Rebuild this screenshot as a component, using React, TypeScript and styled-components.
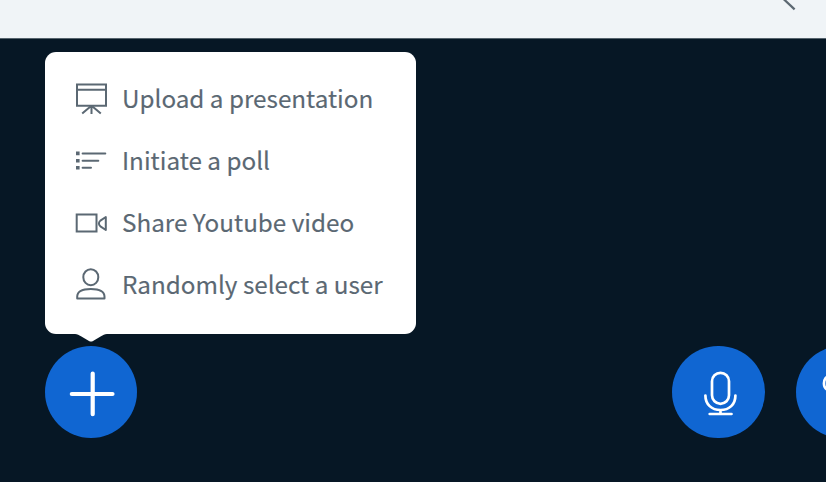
import React from "react";
import styled, { createGlobalStyle } from "styled-components";

const GlobalStyle = createGlobalStyle`
  * { box-sizing: border-box; }
  html, body { margin: 0; padding: 0; overflow: hidden; }
`;

const Page = styled.div`
  display: flex;
  flex-direction: column;
  width: 826px;
  height: 482px;
  overflow: hidden;
  background: #061725;
  font-family: "Noto Sans CJK SC", "Noto Sans", sans-serif;
`;

const Header = styled.header`
  display: flex;
  justify-content: flex-end;
  flex: none;
  height: 39px;
  padding-right: 30px;
  background: #f0f4f7;
  border-bottom: 1px solid #56636d;
`;

const Stage = styled.main`
  flex: 1;
  display: flex;
  flex-direction: column;
  justify-content: flex-end;
  padding: 0 0 44px 45px;
`;

const ActionsBar = styled.footer`
  display: flex;
  align-items: center;
  width: 844px;
  height: 92px;
`;

const MediaControls = styled.div`
  display: flex;
  gap: 31px;
  margin-left: 535px;
`;

const MenuAnchor = styled.div`
  position: relative;
  flex: none;
`;

const RoundButton = styled.button`
  display: flex;
  align-items: center;
  justify-content: center;
  flex: none;
  width: 92.4px;
  height: 92.4px;
  padding: 0;
  border: 0;
  border-radius: 50%;
  background: #1066d2;
  color: #fff;
`;

const Menu = styled.ul`
  position: absolute;
  left: 0;
  bottom: 104px;
  width: 370.5px;
  height: 282px;
  margin: 0;
  padding: 16px 0 0 30px;
  list-style: none;
  border-radius: 11px;
  background: #fff;
`;

const MenuArrow = styled.svg`
  position: absolute;
  left: 30px;
  bottom: -8px;
  display: block;
`;

const MenuItem = styled.li`
  display: flex;
  align-items: center;
  gap: 15px;
  height: 62px;
  color: #5b6873;
`;

const Label = styled.span`
  padding-bottom: 2px;
  font-size: 24.25px;
  line-height: 36px;
  white-space: nowrap;
  -webkit-text-stroke: 0.15px currentColor;
`;

const Icon = styled.svg`
  display: block;
  flex: none;
  fill: none;
  stroke: currentColor;
`;

const PresentationIcon = () => (
  <Icon width="32" height="36" viewBox="0 0 32 36" strokeWidth="2">
    <path d="M2 3.4H31V24.8H2ZM2 8.8H31" />
    <path d="M16.5 25V33M15.5 25.5L7.2 32.6M17.5 25.5L25.8 32.6" />
  </Icon>
);

const PollIcon = () => (
  <Icon width="32" height="36" viewBox="0 0 32 36" strokeWidth="2">
    <path d="M7.6 10.4H30.3M7.6 17.7H23.3M7.6 24.8H16" strokeLinecap="round" />
    <path d="M1 10.4H4.6M1 17.7H4.6M1 24.8H4.6" strokeWidth="3.6" />
  </Icon>
);

const VideoIcon = () => (
  <Icon width="32" height="36" viewBox="0 0 32 36" strokeWidth="2">
    <path d="M1.7 9.5H21.5V26.5H1.7Z" />
    <path d="M30.8 12V25L25.4 21.4Q22.4 18.5 25.4 15.6Z" strokeLinejoin="round" />
  </Icon>
);

const UserIcon = () => (
  <Icon width="32" height="36" viewBox="0 0 32 36" strokeWidth="2">
    <ellipse cx="15.8" cy="10.2" rx="7.5" ry="8" />
    <path d="M2.2 31.4V29.7C2.2 24.7 7 22 15.8 22S29.5 24.7 29.5 29.7V31.4Z" strokeLinejoin="round" />
  </Icon>
);

const items = [
  { label: "Upload a presentation", icon: <PresentationIcon /> },
  { label: "Initiate a poll", icon: <PollIcon /> },
  { label: "Share Youtube video", icon: <VideoIcon /> },
  { label: "Randomly select a user", icon: <UserIcon /> },
];

export default function App() {
  return (
    <>
      <GlobalStyle />
      <Page>
        <Header>
          <Icon width="18" height="12" viewBox="0 0 18 12" color="#5c6872" strokeWidth="2.2">
            <path d="M4.5 -2L16.6 9.4" />
          </Icon>
        </Header>
        <Stage>
          <ActionsBar>
            <MenuAnchor>
              <Menu>
                {items.map((item) => (
                  <MenuItem key={item.label}>
                    {item.icon}
                    <Label>{item.label}</Label>
                  </MenuItem>
                ))}
                <MenuArrow width="32" height="9" viewBox="0 0 32 9">
                  <path d="M0 0V1C2.5 1.2 4 2 6 3.3L14 8Q16 9.2 18 8L26 3.3C28 2 29.5 1.2 32 1V0Z" fill="#fff" stroke="none" />
                </MenuArrow>
              </Menu>
              <RoundButton aria-label="Actions">
                <Icon width="92" height="92" viewBox="0 0 92 92" strokeWidth="4.2" strokeLinecap="round">
                  <path d="M47.7 27.5V68.2M26.8 48H67.5" />
                </Icon>
              </RoundButton>
            </MenuAnchor>
            <MediaControls>
              <RoundButton aria-label="Microphone">
                <Icon width="92" height="92" viewBox="0 0 92 92" strokeWidth="2.7" strokeLinecap="round">
                  <rect x="39" y="26.8" width="17" height="31" rx="8.5" />
                  <path d="M32.4 49.5C32.4 58.5 38.7 64 47.5 64S62.4 58.5 62.4 49.5M47.5 64V68M36.7 68H58.5" />
                </Icon>
              </RoundButton>
              <RoundButton aria-label="Audio">
                <Icon width="92" height="92" viewBox="0 0 92 92" strokeWidth="2.7">
                  <path d="M36 30C29 30 27.8 34 28 38C28.1 41 29.4 43.2 32.5 44" />
                </Icon>
              </RoundButton>
            </MediaControls>
          </ActionsBar>
        </Stage>
      </Page>
    </>
  );
}
